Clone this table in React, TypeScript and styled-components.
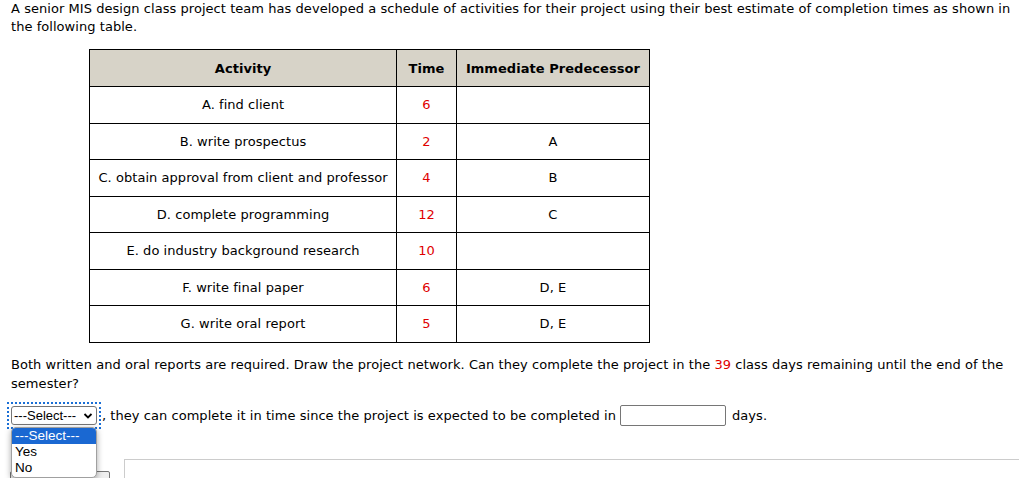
import styled, { createGlobalStyle } from 'styled-components';

const GlobalStyle = createGlobalStyle`
  body {
    margin: 0;
    background: #fff;
    font-family: "DejaVu Sans", Verdana, sans-serif;
    font-size: 13px;
    letter-spacing: 0.05px;
    color: #000;
  }
`;

const Page = styled.div`
  padding: 0 6px 0 11px;
  width: 1019px;
  height: 478px;
  box-sizing: border-box;
  overflow: hidden;
`;

const Intro = styled.p`
  margin: 0;
  line-height: 18px;
`;

const Table = styled.table`
  border-collapse: collapse;
  margin: 13px 0 0 78px;
  width: 561px;
`;

const HeadCell = styled.th<{ $w: number }>`
  width: ${(p) => p.$w}px;
  height: 36px;
  background: #d7d3c8;
  border: 1px solid #000;
  font-weight: bold;
  text-align: center;
  padding: 0;
`;

const Cell = styled.td<{ $red?: boolean }>`
  height: 35.5px;
  border: 1px solid #000;
  text-align: center;
  padding: 0;
  color: ${(p) => (p.$red ? '#e00000' : '#000')};
`;

const Question = styled.p`
  margin: 12px 0 0;
  line-height: 19px;
`;

const Red = styled.span`
  color: #e00000;
`;

const AnswerRow = styled.div`
  display: flex;
  align-items: center;
  margin-top: 13px;
  height: 20px;
`;

const SelectWrap = styled.div`
  position: relative;
  outline: 2px dotted #1a6fd6;
  outline-offset: 2px;
  margin-right: 5px;
`;

const SelectBox = styled.div`
  display: flex;
  align-items: center;
  justify-content: space-between;
  width: 86px;
  height: 19px;
  box-sizing: border-box;
  border: 1px solid #767676;
  border-radius: 3px;
  padding: 0 3px 0 2px;
  font-family: "Liberation Sans", Arial, sans-serif;
  font-size: 13px;
  letter-spacing: 0;
  color: #000;
  background: #fff;
`;

const DropList = styled.ul`
  position: absolute;
  left: 0;
  top: 21px;
  width: 86px;
  margin: 0;
  padding: 0 0 1px;
  list-style: none;
  box-sizing: border-box;
  overflow: hidden;
  background: #fff;
  border: 1px solid #a0a0a0;
  border-radius: 5px;
  box-shadow: 0 2px 6px rgba(0, 0, 0, 0.35);
  font-family: "Liberation Sans", Arial, sans-serif;
  font-size: 13.5px;
  letter-spacing: 0;
  z-index: 5;
`;

const Option = styled.li<{ $active?: boolean }>`
  height: 16px;
  line-height: 16px;
  padding-left: 3px;
  background: ${(p) => (p.$active ? '#1a68d2' : 'transparent')};
  color: ${(p) => (p.$active ? '#fff' : '#000')};
`;

const NumInput = styled.input`
  width: 106px;
  height: 21px;
  box-sizing: border-box;
  margin: 0 6px 0 4px;
  border: 1px solid #767676;
  border-radius: 2px;
  padding: 0;
`;

const Footer = styled.div`
  display: flex;
  align-items: flex-start;
  margin-top: 33px;
`;

const SubmitButton = styled.button`
  margin: 12px 0 0 -1px;
  width: 100px;
  height: 22px;
  background: #efefef;
  border: 1px solid #767676;
  border-radius: 2px;
  font-family: "Liberation Sans", Arial, sans-serif;
  font-size: 13px;
`;

const Panel = styled.div`
  flex: 1;
  margin-left: 14px;
  margin-right: -6px;
  height: 40px;
  border: 1px solid #ccc;
  border-right: none;
`;

const rows: [string, number, string][] = [
  ['A. find client', 6, ''],
  ['B. write prospectus', 2, 'A'],
  ['C. obtain approval from client and professor', 4, 'B'],
  ['D. complete programming', 12, 'C'],
  ['E. do industry background research', 10, ''],
  ['F. write final paper', 6, 'D, E'],
  ['G. write oral report', 5, 'D, E'],
];

function Chevron() {
  return (
    <svg width="10" height="10" viewBox="0 0 10 10">
      <path d="M1.5 3 L5 6.5 L8.5 3" fill="none" stroke="#000" strokeWidth="1.8" />
    </svg>
  );
}

export default function App() {
  return (
    <Page>
      <GlobalStyle />
      <Intro>
        A senior MIS design class project team has developed a schedule of activities for their project using their
        best estimate of completion times as shown in the following table.
      </Intro>
      <Table>
        <thead>
          <tr>
            <HeadCell $w={308}>Activity</HeadCell>
            <HeadCell $w={59}>Time</HeadCell>
            <HeadCell $w={193}>Immediate Predecessor</HeadCell>
          </tr>
        </thead>
        <tbody>
          {rows.map(([name, time, pred]) => (
            <tr key={name}>
              <Cell>{name}</Cell>
              <Cell $red>{time}</Cell>
              <Cell>{pred}</Cell>
            </tr>
          ))}
        </tbody>
      </Table>
      <Question>
        Both written and oral reports are required. Draw the project network. Can they complete the project in the{' '}
        <Red>39</Red> class days remaining until the end of the semester?
      </Question>
      <AnswerRow>
        <SelectWrap>
          <SelectBox>
            <span>---Select---</span>
            <Chevron />
          </SelectBox>
          <DropList>
            <Option $active>---Select---</Option>
            <Option>Yes</Option>
            <Option>No</Option>
          </DropList>
        </SelectWrap>
        <span>, they can complete it in time since the project is expected to be completed in</span>
        <NumInput type="text" />
        <span>days.</span>
      </AnswerRow>
      <Footer>
        <SubmitButton>Submit</SubmitButton>
        <Panel />
      </Footer>
    </Page>
  );
}
